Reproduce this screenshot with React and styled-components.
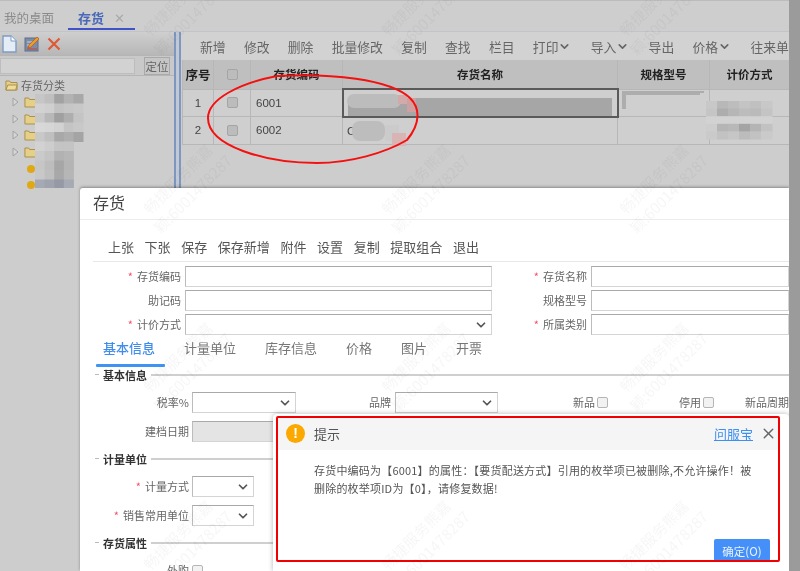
import React from "react";
import styled, { createGlobalStyle } from "styled-components";
import { ChevronDown, X } from "lucide-react";

const GlobalStyle = createGlobalStyle`
	html, body {
		margin: 0;
		padding: 0;
		background: #cdcdcd;
	}
	* {
		box-sizing: border-box;
	}
`;

const Page = styled.div`
	display: flex;
	width: 800px;
	height: 571px;
	overflow: hidden;
	font-family: "Noto Sans CJK SC", "Liberation Sans", sans-serif;
	filter: blur(0.45px);
`;

const Content = styled.div`
	position: relative;
	width: 789px;
	height: 571px;
	overflow: hidden;
	background: #cdcdcd;
`;

const ScrollShade = styled.div`
	flex: 1;
	background: #9b9b9b;
`;

/* ---------- page behind the dialog ---------- */

const TabStrip = styled.div`
	display: flex;
	align-items: stretch;
	height: 32px;
	padding-left: 4px;
	border-top: 1px solid #bcbcbc;
	border-bottom: 1px solid #c3c3ca;
	background: #cecece;
`;

const PlainTab = styled.div`
	margin-right: 14px;
	padding-top: 8px;
	font-size: 12.5px;
	line-height: 18px;
	color: #8b8b8b;
`;

const ActiveTab = styled.div`
	display: flex;
	gap: 10px;
	width: 67px;
	height: 29px;
	padding: 8px 0 0 10px;
	border-bottom: 2px solid #3f52c6;
	font-size: 13px;
	font-weight: 700;
	line-height: 18px;
	color: #4a68b8;

	span {
		font-weight: 400;
		color: #a9a9a9;
	}
`;

const Workspace = styled.div`
	position: relative;
	display: flex;
	height: 156px;
`;

const LeftPane = styled.div`
	width: 174px;
`;

const TreeTools = styled.div`
	display: flex;
	align-items: center;
	gap: 6px;
	height: 23px;
	padding-left: 1px;
	background: linear-gradient(#cfcfcf, #b7b7b7);
`;

const SearchRow = styled.div`
	display: flex;
	align-items: center;
	height: 21px;
	border-top: 1px solid #b5b5b5;
	border-bottom: 1px solid #b5b5b5;
	background: #c9c9c9;
`;

const SearchInput = styled.div`
	width: 135px;
	height: 16px;
	border: 1px solid #bdbdbd;
	background: #d2d2d2;
`;

const LocateButton = styled.div`
	width: 26px;
	height: 18px;
	margin-left: 9px;
	border: 1px solid #a9a9a9;
	background: #c6c6c6;
	font-size: 11.5px;
	line-height: 16px;
	text-align: center;
	color: #666;
`;

const Tree = styled.div`
	padding-top: 1px;
`;

const TreeRow = styled.div`
	display: flex;
	align-items: center;
	gap: 3px;
	height: 16.7px;
	padding-left: ${props => props.$indent}px;
	font-size: 11px;
	color: #666;
`;

const Dot = styled.span`
	width: 8px;
	height: 8px;
	border-radius: 50%;
	background: #e0a814;
`;

const Splitter = styled.div`
	width: 7px;
	border-left: 2px solid #7e97bf;
	border-right: 2px solid #7e97bf;
	background: #c3c9d4;
`;

const RightPane = styled.div`
	flex: 1;
	min-width: 0;
`;

const GridTools = styled.div`
	display: flex;
	align-items: center;
	gap: 18.3px;
	height: 28px;
	padding-left: 19px;
	background: #d2d2d2;
	white-space: nowrap;
`;

const GridTool = styled.div`
	display: flex;
	align-items: center;
	flex-shrink: 0;
	font-size: 12.8px;
	color: #666;

	svg {
		margin-right: 1px;
	}
`;

const GridTable = styled.table`
	width: 607px;
	margin-left: 1px;
	border-collapse: collapse;
	table-layout: fixed;
	background: #cfcfcf;
	font-family: "Liberation Sans", "Noto Sans CJK SC", sans-serif;
`;

const HeadCell = styled.th`
	height: 29px;
	padding: 0;
	border: 1px solid #b7b7b7;
	border-top: 0;
	background: #bfbfbf;
	font-family: "Noto Sans CJK SC", sans-serif;
	font-size: ${props => props.$size || 11.5}px;
	font-weight: 700;
	color: #222;
`;

const BodyCell = styled.td`
	height: 27.5px;
	padding: 0 0 0 ${props => props.$pad || 0}px;
	border: 1px solid #b7b7b7;
	font-size: 11.5px;
	text-align: ${props => props.$align || "left"};
	color: #444;
`;

const SelectedCell = styled(BodyCell)`
	border: 2px solid #5a5a5a;
`;

const Tick = styled.span`
	display: block;
	width: 11px;
	height: 11px;
	margin: 0 auto;
	border: 1px solid #a5a5a5;
	border-radius: 2px;
	background: #bcbcbc;
`;

const MarkLayer = styled.svg`
	position: absolute;
	left: 0;
	top: 0;
	width: 789px;
	height: 156px;
	pointer-events: none;
`;

/* ---------- dialog ---------- */

const Dialog = styled.div`
	position: absolute;
	left: 80px;
	top: 188px;
	right: 0;
	bottom: 0;
	display: flex;
	flex-direction: column;
	overflow: hidden;
	border-radius: 3px 0 0 0;
	background: #fff;
	box-shadow: 0 -1px 3px rgba(0, 0, 0, 0.35);
`;

const DialogTitle = styled.div`
	flex-shrink: 0;
	height: 32px;
	padding: 2px 0 0 13px;
	border-bottom: 1px solid #ececec;
	font-size: 16px;
	line-height: 24px;
	color: #444;
`;

const ActionBar = styled.div`
	display: flex;
	flex-shrink: 0;
	align-items: center;
	gap: 10.6px;
	height: 42px;
	margin-left: 13px;
	padding: 11px 0 0 15px;
	border-bottom: 1px solid #e8e8e8;
	font-size: 13px;
	color: #555;
`;

const HeadForm = styled.div`
	display: grid;
	flex-shrink: 0;
	grid-template-columns: 105px 307px 99px 198px;
	grid-auto-rows: 20.5px;
	row-gap: 3.5px;
	padding-top: 4px;
`;

const Label = styled.div`
	flex-shrink: 0;
	width: ${props => (props.$w ? `${props.$w}px` : "auto")};
	padding-right: ${props => (props.$gap === undefined ? 4 : props.$gap)}px;
	font-size: 11px;
	line-height: 20px;
	text-align: right;
	white-space: nowrap;
	color: #666;

	i {
		margin-right: 4px;
		font-style: normal;
		color: #f4506a;
	}
`;

const Input = styled.div`
	position: relative;
	flex-shrink: 0;
	width: ${props => (props.$w ? `${props.$w}px` : "auto")};
	height: ${props => (props.$w ? "21px" : "auto")};
	border: 1px solid #d4d4d4;
	border-top-color: #a9a9a9;
	border-left-color: #bcbcbc;
	background: ${props => (props.$off ? "#e4e4e4" : "#fff")};
`;

const Arrow = styled(ChevronDown)`
	position: absolute;
	right: 3px;
	top: 3px;
	width: 14px;
	height: 14px;
	stroke-width: 3;
	color: #555;
`;

const TabBar = styled.div`
	display: flex;
	flex-shrink: 0;
	gap: 29px;
	height: 27px;
	padding: 4px 0 0 23px;
	font-size: 13px;
	line-height: 18px;
	color: #777;
`;

const FormTab = styled.div`
	position: relative;
	color: ${props => (props.$active ? "#3f8cec" : "#777")};
	font-weight: ${props => (props.$active ? 500 : 400)};

	${props => props.$active && `
		&::after {
			content: "";
			position: absolute;
			left: -7px;
			right: -10px;
			top: 25px;
			height: 3px;
			border-radius: 1px;
			background: #3f93f2;
		}
	`}
`;

const SectionTitle = styled.div`
	display: flex;
	flex-shrink: 0;
	align-items: center;
	gap: 4px;
	height: 16px;
	margin-top: ${props => props.$top}px;
	padding-left: 15px;
	font-size: 11px;
	font-weight: 700;
	color: #333;

	&::before {
		content: "";
		width: 4px;
		border-top: 1px solid #bbb;
	}

	&::after {
		content: "";
		flex: 1;
		border-top: 2px solid #cfcfcf;
	}
`;

const Row = styled.div`
	display: flex;
	flex-shrink: 0;
	align-items: center;
	height: 21px;
	margin-top: ${props => props.$top}px;
`;

const Check = styled.span`
	flex-shrink: 0;
	width: 11px;
	height: 11px;
	border: 1px solid #b5b5b5;
	border-radius: 2px;
	background: #f2f2f2;
`;

/* ---------- message box ---------- */

const Notice = styled.div`
	position: absolute;
	left: 273px;
	top: 414px;
	right: 0;
	bottom: 0;
	padding: 3px 10px 0 5px;
	border-radius: 4px 4px 0 0;
	background: #fff;
	box-shadow: 0 0 5px rgba(0, 0, 0, 0.3);
`;

const NoticeFrame = styled.div`
	position: relative;
	display: flex;
	flex-direction: column;
	height: 144px;
	overflow: hidden;
`;

const RedFrame = styled.div`
	position: absolute;
	left: 276px;
	top: 416px;
	width: 504px;
	height: 146px;
	border: 2px solid #f00000;
	border-radius: 2px;
	pointer-events: none;
`;

const NoticeHead = styled.div`
	display: flex;
	flex-shrink: 0;
	align-items: center;
	height: 33px;
	padding: 0 2px 0 8px;
	background: #f5f5f5;
`;

const WarnIcon = styled.div`
	width: 19px;
	height: 19px;
	border-radius: 50%;
	background: #fba800;
	font-family: "Liberation Sans", sans-serif;
	font-size: 14px;
	font-weight: 700;
	line-height: 19px;
	text-align: center;
	color: #fff;
`;

const NoticeTitle = styled.div`
	flex: 1;
	margin-left: 9px;
	font-size: 13px;
	color: #555;
`;

const HelpLink = styled.div`
	margin-right: 7px;
	font-size: 13px;
	color: #3d8ff2;
	text-decoration: underline;
`;

const CloseIcon = styled(X)`
	width: 17px;
	height: 17px;
	stroke-width: 2;
	color: #666;
`;

const NoticeBody = styled.div`
	flex: 1;
	padding: 10.5px 25px 0 36px;
	font-size: 11px;
	letter-spacing: 0.2px;
	line-height: 18.5px;
	color: #555;
`;

const ConfirmButton = styled.div`
	position: absolute;
	right: 9px;
	bottom: -2px;
	width: 56px;
	height: 24px;
	border-radius: 2px;
	background: #4590f8;
	font-size: 11.5px;
	line-height: 24px;
	text-align: center;
	color: #e9f1ff;
`;

/* ---------- watermark ---------- */

const Watermarks = styled.div`
	position: absolute;
	left: -172px;
	top: -81px;
	display: grid;
	grid-template-columns: repeat(5, 238px);
	grid-auto-rows: 178px;
	pointer-events: none;
`;

const Watermark = styled.div`
	display: flex;
	align-items: center;
	justify-content: center;
	transform: rotate(-45deg);
	font-size: 15px;
	line-height: 21px;
	text-align: center;
	white-space: nowrap;
	color: rgba(0, 0, 0, 0.038);
`;

/* ---------- small drawings ---------- */

const NewIcon = () => (
	<svg width="17" height="20" viewBox="0 0 17 20">
		<path d="M2 2h8l5 5v11H2z" fill="#e4ecf6" stroke="#7f9cc4" strokeWidth="1.4" />
		<path d="M10 2v5h5" fill="#fff" stroke="#7f9cc4" />
	</svg>
);

const EditIcon = () => (
	<svg width="17" height="18" viewBox="0 0 17 18">
		<rect x="1" y="3" width="13" height="13" fill="#7d8ba6" stroke="#5f6f8e" />
		<path d="M3 7h7M3 10h5" stroke="#c8d2e2" />
		<path d="M4 13l1-3 8-8 2 2-8 8z" fill="#e6a21c" stroke="#c8452a" strokeWidth=".6" />
		<path d="M3 14h10" stroke="#c8452a" />
	</svg>
);

const DeleteIcon = () => (
	<svg width="14" height="14" viewBox="0 0 14 14">
		<path d="M1.5 1.5l11 11M12.5 1.5l-11 11" stroke="#df5a34" strokeWidth="2.2" />
	</svg>
);

const Folder = ({ open }) => (
	<svg width="13" height="12" viewBox="0 0 14 12" preserveAspectRatio="none">
		<path d="M1 2h4l1 1.5h7V11H1z" fill="#e6cf86" stroke="#a98f4c" />
		{open && <path d="M1 11l2-5h10l-1.5 5z" fill="#eedc9c" stroke="#a98f4c" />}
	</svg>
);

const Twisty = () => (
	<svg width="10" height="10" viewBox="0 0 10 10">
		<path d="M2 1l5 4-5 4z" fill="#d6d6d6" stroke="#a2a2a2" />
	</svg>
);

const Mosaic = ({ x, y, w, h, rows }) => rows.map((row, r) =>
	row.map((fill, c) => (
		<rect key={`${r}-${c}`} x={x + c * w} y={y + r * h} width={w + 0.5} height={h + 0.5} fill={fill} />
	))
);

const treeBlur = [
	["#c6c6c6", "#bfbfbf", "#a2a2a2", "#b2b2b2", "#a8a8a8"],
	["#d2d2d2", "#cfcfcf", "#c2c2c2", "#c6c6c6", "#c8c8c8"],
	["#c8c8c8", "#b8b8b8", "#a0a0a0", "#aeaeae", "#c4c4c4"],
	["#d8d8d8", "#d6d6d6", "#d2d2d2", "#c4c4c4", "#c8c8c8"],
	["#c8c8c8", "#bfbfbf", "#a8a8a8", "#aeaeae", "#a4a4a4"],
	["#d2d2d2", "#cdcdcd", "#c4c4c4", "#c4c4c4"],
	["#cacaca", "#c4c4c4", "#b2b2b2", "#b6b6b6"],
	["#c6c6c6", "#bdbdbd", "#a6a6a6", "#b4b4b4"],
	["#c8c8c8", "#bfbfbf", "#a8a8a8", "#b6b6b6"],
	["#a4a9b3", "#9ea3ae", "#9599a5", "#a5aab5"],
	["#d6d6d6", "#d6d6d6", "#d6d6d6", "#d6d6d6"],
];

const priceBlur = [
	["#c8c8c8", "#b8b8b8", "#bdbdbd", "#c4c4c4", "#c0c0c0", "#c8c8c8"],
	["#c5c5c5", "#adadad", "#b6b6b6", "#bcbcbc", "#bababa", "#c4c4c4"],
	["#d2d2d2", "#d2d2d2", "#d2d2d2", "#d2d2d2", "#d2d2d2", "#d2d2d2"],
	["#cdcdcd", "#b5b5b5", "#b8b8b8", "#a4a4a4", "#b4b4b4", "#c2c2c2"],
	["#cacaca", "#c2c2c2", "#c6c6c6", "#bcbcbc", "#c2c2c2", "#cacaca"],
];

const tools = [
	{ name: "新增" }, { name: "修改" }, { name: "删除" }, { name: "批量修改" }, { name: "复制" },
	{ name: "查找" }, { name: "栏目" }, { name: "打印", menu: true }, { name: "导入", menu: true },
	{ name: "导出" }, { name: "价格", menu: true }, { name: "往来单" },
];

const actions = ["上张", "下张", "保存", "保存新增", "附件", "设置", "复制", "提取组合", "退出"];
const tabs = ["基本信息", "计量单位", "库存信息", "价格", "图片", "开票"];

export default function App() {
	return (
		<Page>
			<GlobalStyle />
			<Content>
				<TabStrip>
					<PlainTab>我的桌面</PlainTab>
					<ActiveTab>存货<span>✕</span></ActiveTab>
				</TabStrip>
				<Workspace>
					<LeftPane>
						<TreeTools>
							<NewIcon />
							<EditIcon />
							<DeleteIcon />
						</TreeTools>
						<SearchRow>
							<SearchInput />
							<LocateButton>定位</LocateButton>
						</SearchRow>
						<Tree>
							<TreeRow $indent={5}><Folder open /><span>存货分类</span></TreeRow>
							<TreeRow $indent={11}><Twisty /><Folder /></TreeRow>
							<TreeRow $indent={11}><Twisty /><Folder /></TreeRow>
							<TreeRow $indent={11}><Twisty /><Folder /></TreeRow>
							<TreeRow $indent={11}><Twisty /><Folder /></TreeRow>
							<TreeRow $indent={27}><Dot /></TreeRow>
							<TreeRow $indent={27}><Dot /></TreeRow>
						</Tree>
					</LeftPane>
					<Splitter />
					<RightPane>
						<GridTools>
							{tools.map(tool => (
								<GridTool key={tool.name}>
									{tool.name}
									{tool.menu && <ChevronDown size={13} strokeWidth={3} />}
								</GridTool>
							))}
						</GridTools>
						<GridTable>
							<colgroup>
								<col width="31" />
								<col width="37" />
								<col width="92" />
								<col width="275" />
								<col width="92" />
								<col width="80" />
							</colgroup>
							<thead>
								<tr>
									<HeadCell $size={12.5}>序号</HeadCell>
									<HeadCell><Tick /></HeadCell>
									<HeadCell>存货编码</HeadCell>
									<HeadCell>存货名称</HeadCell>
									<HeadCell>规格型号</HeadCell>
									<HeadCell>计价方式</HeadCell>
								</tr>
							</thead>
							<tbody>
								<tr>
									<BodyCell $align="center">1</BodyCell>
									<BodyCell><Tick /></BodyCell>
									<BodyCell $pad={5}>6001</BodyCell>
									<SelectedCell />
									<BodyCell />
									<BodyCell />
								</tr>
								<tr>
									<BodyCell $align="center">2</BodyCell>
									<BodyCell><Tick /></BodyCell>
									<BodyCell $pad={5}>6002</BodyCell>
									<BodyCell $pad={4}>C</BodyCell>
									<BodyCell />
									<BodyCell />
								</tr>
							</tbody>
						</GridTable>
					</RightPane>
					<MarkLayer viewBox="0 31 789 156">
						<Mosaic x={35} y={93} w={9.6} h={9.5} rows={treeBlur} />
						<rect x="348" y="97" width="264" height="18" fill="#a6a6a6" />
						<rect x="347" y="93" width="54" height="14" rx="7" fill="#bcbcbc" />
						<rect x="398" y="94" width="9" height="9" fill="#d3a9a9" />
						<rect x="407" y="97" width="9" height="14" fill="#cfa0a0" />
						<rect x="352" y="120" width="33" height="20" rx="8" fill="#bdbdbd" />
						<rect x="385" y="124" width="14" height="16" fill="#cbcbcb" />
						<rect x="392" y="132" width="14" height="13" fill="#d8b4b4" />
						<path d="M622 90h82v2h-4v2h-74v14h-4z" fill="#adadad" />
						<Mosaic x={706} y={100} w={11} h={7.6} rows={priceBlur} />
						<path
							d="M277 75C330 72 390 78 410 97C420 107 421 122 407 139C385 152 350 162 317 162C265 162 208 145 208 117C208 98 240 82 277 75Z"
							fill="none"
							stroke="#f51010"
							strokeWidth="2"
						/>
					</MarkLayer>
				</Workspace>

				<Dialog>
					<DialogTitle>存货</DialogTitle>
					<ActionBar>
						{actions.map(action => <div key={action}>{action}</div>)}
					</ActionBar>
					<HeadForm>
						<Label><i>*</i>存货编码</Label>
						<Input />
						<Label><i>*</i>存货名称</Label>
						<Input />
						<Label>助记码</Label>
						<Input />
						<Label>规格型号</Label>
						<Input />
						<Label><i>*</i>计价方式</Label>
						<Input><Arrow /></Input>
						<Label><i>*</i>所属类别</Label>
						<Input />
					</HeadForm>
					<TabBar>
						{tabs.map((tab, i) => <FormTab key={tab} $active={i === 0}>{tab}</FormTab>)}
					</TabBar>
					<SectionTitle $top={5}>基本信息</SectionTitle>
					<Row $top={9}>
						<Label $w={112} $gap={3}>税率%</Label>
						<Input $w={104}><Arrow /></Input>
						<Label $w={99}>品牌</Label>
						<Input $w={103}><Arrow /></Input>
						<Label $w={99} $gap={2}>新品</Label>
						<Check />
						<Label $w={95} $gap={2}>停用</Label>
						<Check />
						<Label $w={75} $gap={0}>新品周期</Label>
					</Row>
					<Row $top={8}>
						<Label $w={112} $gap={3}>建档日期</Label>
						<Input $w={104} $off />
					</Row>
					<SectionTitle $top={9}>计量单位</SectionTitle>
					<Row $top={9}>
						<Label $w={112} $gap={3}><i>*</i>计量方式</Label>
						<Input $w={62}><Arrow /></Input>
					</Row>
					<Row $top={8}>
						<Label $w={112} $gap={3}><i>*</i>销售常用单位</Label>
						<Input $w={62}><Arrow /></Input>
					</Row>
					<SectionTitle $top={9}>存货属性</SectionTitle>
					<Row $top={9}>
						<Label $w={112} $gap={3}>外购</Label>
						<Check />
					</Row>
				</Dialog>

				<Notice>
					<NoticeFrame>
						<NoticeHead>
							<WarnIcon>!</WarnIcon>
							<NoticeTitle>提示</NoticeTitle>
							<HelpLink>问服宝</HelpLink>
							<CloseIcon />
						</NoticeHead>
						<NoticeBody>
							存货中编码为【6001】的属性：【要货配送方式】引用的枚举项已被删除,不允许操作！被删除的枚举项ID为【0】，请修复数据!
						</NoticeBody>
						<ConfirmButton>确定(O)</ConfirmButton>
					</NoticeFrame>
				</Notice>
				<RedFrame />

				<Watermarks>
					{Array.from({ length: 20 }, (_, i) => (
						<Watermark key={i}>畅捷服务熊嘉<br />颖:6001478287</Watermark>
					))}
				</Watermarks>
			</Content>
			<ScrollShade />
		</Page>
	);
}
